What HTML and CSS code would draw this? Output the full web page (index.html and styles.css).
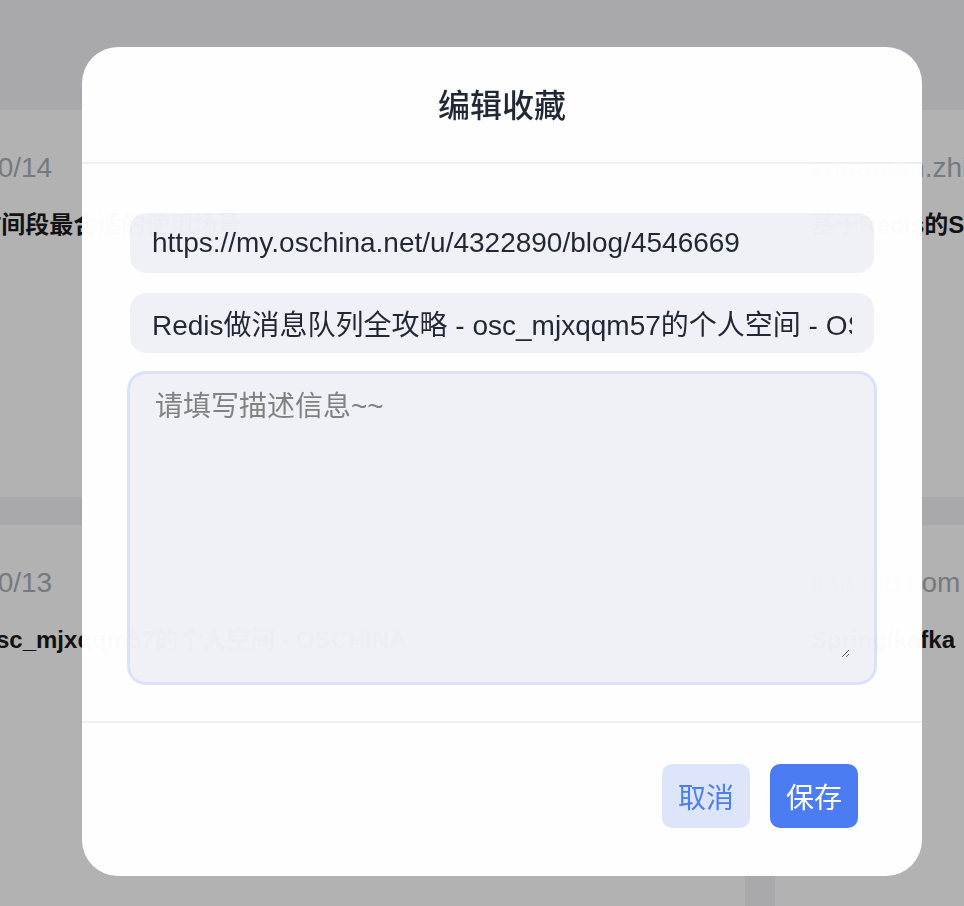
FILE: index.html
```html
<!DOCTYPE html>
<html>
<head>
    <meta charset="utf-8">
    <title>编辑收藏</title>
    <link rel="stylesheet" href="styles.css">
</head>
<body>
    <div class="page">
        <div class="topbar"></div>
        <div class="board">
            <div class="grid">
                <div class="card">
                    <div class="card-date">2023/10/14</div>
                    <div class="card-title">Redis时间段最合适的使用场景</div>
                </div>
                <div class="card">
                    <div class="card-date">zhuanlan.zhihu.com</div>
                    <div class="card-title">基于Redis的SpringBoot</div>
                </div>
                <div class="card">
                    <div class="card-date">2023/10/13</div>
                    <div class="card-title">攻略 - osc_mjxqqm57的个人空间 - OSCHINA</div>
                </div>
                <div class="card">
                    <div class="card-date">jianshu.com</div>
                    <div class="card-title">Spring/kafka</div>
                </div>
            </div>
        </div>
    </div>

    <div class="mask">
        <div class="dialog">
            <div class="dialog-header">编辑收藏</div>
            <div class="dialog-body">
                <input class="field" type="text" value="https://my.oschina.net/u/4322890/blog/4546669">
                <input class="field" type="text" value="Redis做消息队列全攻略 - osc_mjxqqm57的个人空间 - OSCHINA - 中文开源技术交流社区">
                <div class="area-wrap">
                    <textarea class="area" placeholder="请填写描述信息~~" autofocus></textarea>
                </div>
            </div>
            <div class="dialog-footer">
                <button class="btn btn-cancel">取消</button>
                <button class="btn btn-save">保存</button>
            </div>
        </div>
    </div>
</body>
</html>
```

FILE: styles.css
```css
html, body {
    margin: 0;
    height: 100%;
    overflow: hidden;
}

body {
    font-family: "Liberation Sans", "Noto Sans CJK SC", sans-serif;
    background-color: #f2f3f8;
}

.topbar {
    height: 110px;
}

.board {
    display: flex;
    justify-content: center;
}

.grid {
    flex: none;
    display: grid;
    grid-template-columns: 869px 313px;
    column-gap: 30px;
    row-gap: 28px;
}

.card {
    background-color: #fff;
    height: 387px;
    padding: 41px 36px 0;
    box-sizing: border-box;
    white-space: nowrap;
    overflow: hidden;
}

.card-date {
    font-size: 28px;
    line-height: 34px;
    color: #a8aeb9;
}

.card-title {
    margin-top: 23px;
    font-size: 24px;
    line-height: 34px;
    font-weight: 600;
    color: #1a1a1a;
}

/* overlay */
.mask {
    position: fixed;
    top: 0;
    left: 0;
    right: 0;
    bottom: 0;
    background-color: rgba(0, 0, 0, 0.3);
    padding: 47px 0 0 82px;
}

.dialog {
    width: 840px;
    background-color: #fff;
    border-radius: 36px;
    opacity: 0.985;
    overflow: hidden;
}

.dialog-header {
    height: 115px;
    line-height: 119px;
    text-align: center;
    font-size: 32px;
    font-weight: 500;
    color: #1f2633;
    border-bottom: 2px solid #f0f1f3;
}

.dialog-body {
    display: flex;
    flex-direction: column;
    gap: 20px;
    padding: 49px 48px 39px;
}

.field {
    display: block;
    box-sizing: border-box;
    width: 100%;
    height: 60px;
    border: none;
    outline: none;
    border-radius: 16px;
    background-color: #f1f2f7;
    padding: 0 22px;
    font-family: "Liberation Sans", "Noto Sans CJK SC", sans-serif;
    font-size: 28px;
    color: #1f2633;
}

.area-wrap {
    height: 308px;
    margin-top: 1px;
    box-sizing: border-box;
    padding: 17px 24px 24px 25px;
    border-radius: 16px;
    background-color: #f0f2f8;
    box-shadow: 0 0 0 3px #dbe3fb;
}

.area {
    display: block;
    box-sizing: border-box;
    width: 100%;
    height: 100%;
    margin: 0;
    padding: 0;
    border: none;
    outline: none;
    background: transparent;
    font-family: "Liberation Sans", "Noto Sans CJK SC", sans-serif;
    font-size: 28px;
    line-height: 32px;
    color: #1f2633;
}

.area::placeholder {
    color: #808080;
}

.dialog-footer {
    display: flex;
    justify-content: flex-end;
    gap: 20px;
    padding: 41px 64px 48px;
    border-top: 2px solid #f0f1f3;
}

.btn {
    width: 88px;
    height: 64px;
    padding: 0;
    border: none;
    border-radius: 10px;
    font-family: "Liberation Sans", "Noto Sans CJK SC", sans-serif;
    font-size: 28px;
    cursor: pointer;
}

.btn-cancel {
    background-color: #dde6fb;
    color: #4c7cf3;
}

.btn-save {
    background-color: #4b7bf3;
    color: #fff;
}
```
